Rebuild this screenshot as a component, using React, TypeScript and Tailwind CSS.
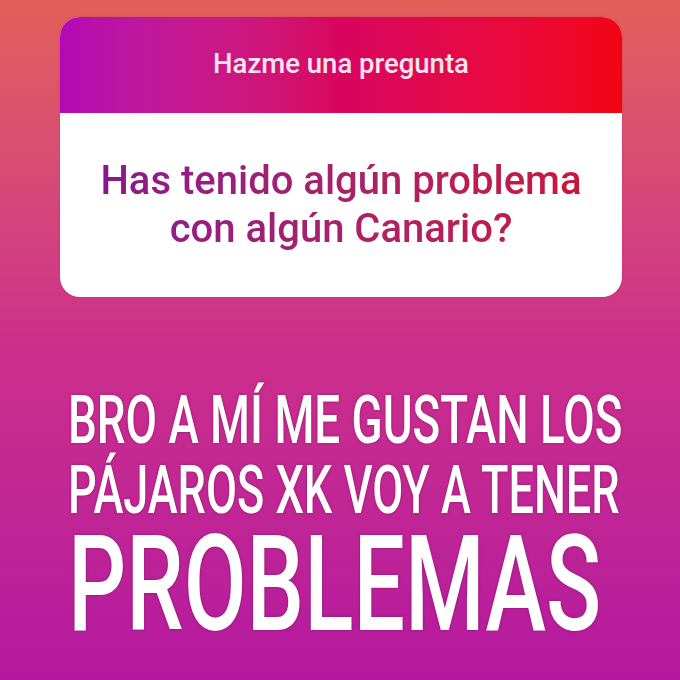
import React from 'react';

const StorySticker: React.FC = () => {
  return (
    <div className="w-[562px] rounded-[20px] overflow-hidden bg-white shadow-[0_0_2px_rgba(120,0,60,0.25)]">
      <div className="h-[96px] flex items-center justify-center bg-gradient-to-r from-[#b507b5] via-[#d9045e] to-[#f3040e]">
        <span className="text-[27.5px] font-medium text-[#fbe3f1] pb-[2px]">Hazme una pregunta</span>
      </div>
      <div className="h-[184px] flex items-center justify-center">
        <p className="inline-block text-center text-[40px] leading-[48px] font-medium bg-gradient-to-r from-[#8a168f] to-[#c8153a] bg-clip-text text-transparent">
          Has tenido algún problema
          <br />
          con algún Canario?
        </p>
      </div>
    </div>
  );
};

export default function App() {
  return (
    <div className="w-[680px] h-[680px] overflow-hidden bg-gradient-to-b from-[#e2605a] via-[#cd2f8a] to-[#b4189f] font-['Roboto','Liberation_Sans',sans-serif]">
      <div className="pt-[17px] pl-[60px]">
        <StorySticker />
      </div>

      <div className="pt-[88px] pl-[68px] text-white font-medium [text-shadow:0_0_3px_rgba(90,0,70,0.55)]">
        <div className="text-[67.5px] leading-[70px] whitespace-nowrap origin-left scale-x-[0.677]">
          BRO A MÍ ME GUSTAN LOS
        </div>
        <div className="text-[67.5px] leading-[70px] whitespace-nowrap origin-left scale-x-[0.667]">
          PÁJAROS XK VOY A TENER
        </div>
        <div className="text-[133.6px] leading-[120px] whitespace-nowrap origin-left scale-x-[0.683]">
          PROBLEMAS
        </div>
      </div>
    </div>
  );
}
